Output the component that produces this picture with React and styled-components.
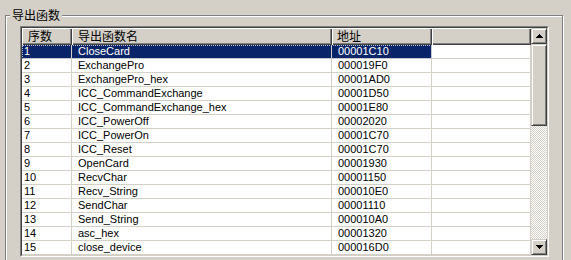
import React from 'react';
import styled, { createGlobalStyle } from 'styled-components';

const Global = createGlobalStyle`
  html, body {
    margin: 0;
    padding: 0;
    background: #d4d0c8;
    overflow: hidden;
  }
  body {
    font-family: "Liberation Sans", "Noto Sans CJK SC", sans-serif;
  }
`;

const Window = styled.div`
  width: 571px;
  height: 260px;
  box-sizing: border-box;
  padding: 15px 0 0 5px;
  background: #d4d0c8;
  overflow: hidden;
`;

const Group = styled.div`
  position: relative;
  width: 558px;
  height: 270px;
  box-sizing: border-box;
  border: 1px solid #808080;
  box-shadow: inset 1px 1px 0 #fff, 1px 1px 0 #fff;
  padding: 10px 0 0 14px;
`;

const GroupTitle = styled.span`
  position: absolute;
  left: 4px;
  top: -9px;
  padding: 0 2px;
  background: #d4d0c8;
  color: #000;
  font: 12px/16px "Noto Sans CJK SC", sans-serif;
`;

const ListOuter = styled.div`
  width: 529px;
  height: 231px;
  box-sizing: border-box;
  border: 1px solid;
  border-color: #808080 #fff #fff #808080;
`;

const ListInner = styled.div`
  height: 100%;
  box-sizing: border-box;
  border: 1px solid;
  border-color: #404040 #d4d0c8 #d4d0c8 #404040;
  background: #fff;
  display: flex;
`;

const Pane = styled.div`
  width: 509px;
  display: flex;
  flex-direction: column;
  overflow: hidden;
`;

const COLS = '50px 260px 100px 99px';

const Header = styled.div`
  display: grid;
  grid-template-columns: ${COLS};
  height: 17px;
  flex: none;
`;

const HeaderCell = styled.div`
  box-sizing: border-box;
  background: #d4d0c8;
  box-shadow: inset 1px 1px 0 #fff, inset -1px -1px 0 #404040, inset -2px -2px 0 #808080;
  padding-left: ${p => p.$pad}px;
  color: #000;
  font: 12px/16px "Noto Sans CJK SC", sans-serif;
  white-space: nowrap;
  overflow: hidden;
`;

const Row = styled.div`
  display: grid;
  grid-template-columns: ${COLS};
  height: 14px;
  flex: none;

  ${p => p.$selected && `
    &::after {
      content: '';
      grid-row: 1;
      grid-column: 1 / 4;
      border: 1px dotted #b8c0d8;
      pointer-events: none;
    }
  `}
`;

const Cell = styled.div`
  grid-row: 1;
  grid-column: ${p => p.$col};
  box-sizing: border-box;
  height: 14px;
  border-right: 1px solid #d4d0c8;
  border-bottom: 1px solid #d4d0c8;
  padding-left: ${p => p.$pad}px;
  background: ${p => (p.$selected ? '#0a246a' : '#fff')};
  color: ${p => (p.$selected ? '#fff' : '#000')};
  font: 11px/13px "Liberation Sans", sans-serif;
  white-space: nowrap;
  overflow: hidden;
`;

const ScrollBar = styled.div`
  width: 16px;
  flex: none;
  display: flex;
  flex-direction: column;
  background: repeating-conic-gradient(#d4d0c8 0% 25%, #fff 0% 50%) 0 0 / 2px 2px;
`;

const ScrollButton = styled.div`
  height: ${p => p.$h || 16}px;
  flex: none;
  box-sizing: border-box;
  background: #d4d0c8;
  border: 1px solid;
  border-color: #d4d0c8 #404040 #404040 #d4d0c8;
  box-shadow: inset 1px 1px 0 #fff, inset -1px -1px 0 #808080;
  display: flex;
  align-items: center;
  justify-content: center;
  margin-top: ${p => (p.$bottom ? 'auto' : '0')};
`;

const Arrow = ({ down }) => (
  <svg width="7" height="4" viewBox="0 0 7 4" shapeRendering="crispEdges"
    style={down ? { transform: 'scaleY(-1)' } : undefined}>
    <path fill="#000" d="M3 0h1v1h-1zM2 1h3v1h-3zM1 2h5v1h-5zM0 3h7v1h-7z" />
  </svg>
);

const exportsList = [
  ['1', 'CloseCard', '00001C10'],
  ['2', 'ExchangePro', '000019F0'],
  ['3', 'ExchangePro_hex', '00001AD0'],
  ['4', 'ICC_CommandExchange', '00001D50'],
  ['5', 'ICC_CommandExchange_hex', '00001E80'],
  ['6', 'ICC_PowerOff', '00002020'],
  ['7', 'ICC_PowerOn', '00001C70'],
  ['8', 'ICC_Reset', '00001C70'],
  ['9', 'OpenCard', '00001930'],
  ['10', 'RecvChar', '00001150'],
  ['11', 'Recv_String', '000010E0'],
  ['12', 'SendChar', '00001110'],
  ['13', 'Send_String', '000010A0'],
  ['14', 'asc_hex', '00001320'],
  ['15', 'close_device', '000016D0'],
];

export default function App() {
  return (
    <Window>
      <Global />
      <Group>
        <GroupTitle>导出函数</GroupTitle>
        <ListOuter>
          <ListInner>
            <Pane>
              <Header>
                <HeaderCell $pad={6}>序数</HeaderCell>
                <HeaderCell $pad={6}>导出函数名</HeaderCell>
                <HeaderCell $pad={5}>地址</HeaderCell>
                <HeaderCell $pad={6} />
              </Header>
              {exportsList.map(([ord, name, addr], i) => {
                const sel = i === 0;
                return (
                  <Row key={ord} $selected={sel}>
                    <Cell $col={1} $pad={2} $selected={sel}>{ord}</Cell>
                    <Cell $col={2} $pad={6} $selected={sel}>{name}</Cell>
                    <Cell $col={3} $pad={6} $selected={sel}>{addr}</Cell>
                    <Cell $col={4} $pad={6} />
                  </Row>
                );
              })}
            </Pane>
            <ScrollBar>
              <ScrollButton><Arrow /></ScrollButton>
              <ScrollButton $h={82} />
              <ScrollButton $bottom><Arrow down /></ScrollButton>
            </ScrollBar>
          </ListInner>
        </ListOuter>
      </Group>
    </Window>
  );
}
